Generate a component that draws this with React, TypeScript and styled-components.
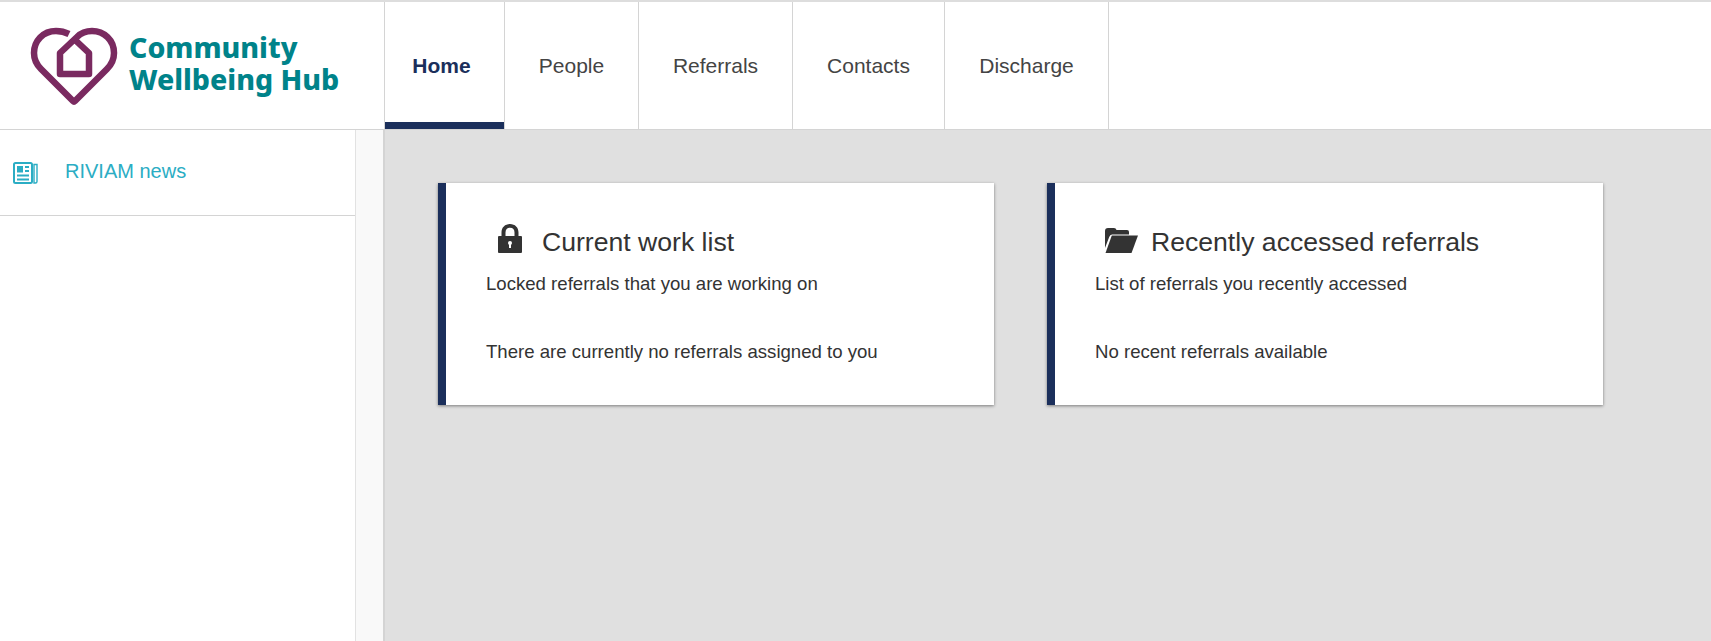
import React from 'react'
import styled, { createGlobalStyle } from 'styled-components'

const GlobalStyle = createGlobalStyle`
  html, body {
    margin: 0;
    padding: 0;
    height: 100%;
    overflow: hidden;
    background: #fff;
    font-family: "Liberation Sans", Arial, sans-serif;
    color: #333;
  }
  #root {
    height: 100%;
  }
`

const tabs = ['Home', 'People', 'Referrals', 'Contacts', 'Discharge']
const tabWidths = [119, 133, 153, 151, 163]

const cards = [
  {
    title: 'Current work list',
    subtitle: 'Locked referrals that you are working on',
    empty: 'There are currently no referrals assigned to you',
    icon: 'lock',
  },
  {
    title: 'Recently accessed referrals',
    subtitle: 'List of referrals you recently accessed',
    empty: 'No recent referrals available',
    icon: 'folder',
  },
]

function LogoMark() {
  return (
    <SLogoMark viewBox="0 0 110 100">
      <path
        d="M49 18 C45 16 41 15 36 15 C23 15 14 25 14 37 C14 44 17 49 21 53 L53 85 C54 86 54 86 55 85 L87 53 C91 49 94 44 94 37 C94 24 84 15 72 15 C66 15 61 17 57 21 L40 37 L40 58 L69 58 L69 37 L53 22"
        fill="none"
        stroke="#7a2a60"
        strokeWidth="6.5"
        strokeLinejoin="round"
      />
    </SLogoMark>
  )
}

function NewsIcon() {
  return (
    <svg width="25" height="22" viewBox="0 0 25 22">
      <rect x="1" y="1" width="18" height="20" rx="1.5" fill="none" stroke="#2badc4" strokeWidth="2" />
      <path d="M21 2.5 H24 V19.5 Q24 21 22.5 21 H21 Z" fill="none" stroke="#2badc4" strokeWidth="1.4" />
      <rect x="4" y="4" width="6" height="6.5" fill="#2badc4" />
      <path d="M12 5 H16 M12 9 H16 M4 13.5 H16 M4 17.5 H16" stroke="#2badc4" strokeWidth="2" />
    </svg>
  )
}

function LockIcon() {
  return (
    <svg width="24" height="29" viewBox="0 0 24 29">
      <path
        fillRule="evenodd"
        fill="#333"
        d="M1 12 H3.5 V8.5 C3.5 3.5 7 0 12 0 C17 0 20.5 3.5 20.5 8.5 V12 H23 Q24 12 24 13 V28 Q24 29 23 29 H1 Q0 29 0 28 V13 Q0 12 1 12 Z M7.5 12 H16.5 V8.5 C16.5 5.5 15 3.8 12 3.8 C9 3.8 7.5 5.5 7.5 8.5 Z"
      />
      <circle cx="12" cy="19" r="2" fill="#fff" />
      <rect x="11" y="19" width="2" height="5" fill="#fff" />
    </svg>
  )
}

function FolderIcon() {
  return (
    <svg width="33" height="25" viewBox="0 0 33 25">
      <path
        fill="#333"
        d="M0 3 Q0 0 3 0 H9 Q11 0 11.5 2 H22 Q24 2 24 4 V6.5 H7 Q5 6.5 4.2 9 L0 20 Z"
      />
      <path fill="#333" d="M6.8 7.5 H33 L26.5 25 H0.5 Z" />
    </svg>
  )
}

export default function App() {
  return (
    <SPage>
      <GlobalStyle />
      <SHeader>
        <SLogo>
          <LogoMark />
          <SLogoText>
            Community
            <br />
            Wellbeing Hub
          </SLogoText>
        </SLogo>
        <STabs>
          {tabs.map((tab, index) => (
            <STab key={tab} $active={index === 0} $width={tabWidths[index]}>
              {tab}
            </STab>
          ))}
        </STabs>
      </SHeader>
      <SBody>
        <SSidebar>
          <SSideItem>
            <SSideIcon>
              <NewsIcon />
            </SSideIcon>
            <SSideLabel>RIVIAM news</SSideLabel>
          </SSideItem>
        </SSidebar>
        <SGutter />
        <SMain>
          {cards.map((card) => (
            <SCard key={card.title}>
              <STitleRow>
                <SIconSlot $inset={card.icon === 'lock' ? 12 : 10}>
                  {card.icon === 'lock' ? <LockIcon /> : <FolderIcon />}
                </SIconSlot>
                <STitle>{card.title}</STitle>
              </STitleRow>
              <SSubtitle>{card.subtitle}</SSubtitle>
              <SEmpty>{card.empty}</SEmpty>
            </SCard>
          ))}
        </SMain>
      </SBody>
    </SPage>
  )
}

const SPage = styled.div`
  height: 100%;
  display: flex;
  flex-direction: column;
  border-top: 2px solid #ddd;
  box-sizing: border-box;
`

const SHeader = styled.header`
  display: flex;
  height: 128px;
  flex: none;
  box-sizing: border-box;
  border-bottom: 1px solid #d4d4d4;
`

const SLogo = styled.div`
  width: 385px;
  flex: none;
  box-sizing: border-box;
  padding-left: 20px;
  display: flex;
  align-items: center;
  border-right: 1px solid #d4d4d4;
`

const SLogoMark = styled.svg`
  width: 110px;
  height: 100px;
  flex: none;
`

const SLogoText = styled.div`
  font-family: "Noto Sans", sans-serif;
  font-weight: 800;
  font-size: 28.5px;
  line-height: 32px;
  color: #00838a;
  margin: -5px 0 0 -1px;
  white-space: nowrap;
`

const STabs = styled.nav`
  display: flex;
`

const STab = styled.div<{ $active: boolean; $width: number }>`
  width: ${({ $width }) => $width}px;
  box-sizing: border-box;
  flex: none;
  display: flex;
  align-items: center;
  justify-content: center;
  padding: 8px ${({ $active }) => ($active ? 6 : 0)}px 0 0;
  font-size: 21px;
  font-weight: ${({ $active }) => ($active ? 700 : 400)};
  color: ${({ $active }) => ($active ? '#1b2f5b' : '#444')};
  border-bottom: 7px solid ${({ $active }) => ($active ? '#1b2f5b' : 'transparent')};
  box-shadow: 1px 0 0 #d4d4d4;
  margin-right: 1px;
`

const SBody = styled.div`
  flex: 1;
  display: flex;
  min-height: 0;
`

const SSidebar = styled.aside`
  width: 356px;
  flex: none;
  box-sizing: border-box;
  border-right: 1px solid #e2e2e2;
`

const SSideItem = styled.div`
  height: 86px;
  box-sizing: border-box;
  display: flex;
  align-items: center;
  padding-left: 13px;
  font-size: 20px;
  color: #2badc4;
  border-bottom: 1px solid #d4d4d4;
`

const SSideIcon = styled.span`
  width: 52px;
  display: flex;
`

const SSideLabel = styled.span`
  margin-bottom: 2px;
`

const SGutter = styled.div`
  width: 29px;
  flex: none;
  box-sizing: border-box;
  background: #f9f9f9;
  border-right: 2px solid #d4d4d4;
`

const SMain = styled.main`
  flex: 1;
  background: #e0e0e0;
  padding: 53px;
  display: grid;
  grid-template-columns: 556px 556px;
  gap: 53px;
  align-items: start;
`

const SCard = styled.section`
  height: 222px;
  box-sizing: border-box;
  background: #fff;
  border-left: 8px solid #1b2f5b;
  box-shadow: 0 1px 3px rgba(0, 0, 0, 0.45);
  padding: 41px 40px 0;
`

const STitleRow = styled.div`
  display: flex;
  align-items: center;
  height: 29px;
`

const SIconSlot = styled.span<{ $inset: number }>`
  width: 56px;
  height: 29px;
  flex: none;
  box-sizing: border-box;
  padding-left: ${({ $inset }) => $inset}px;
  display: flex;
  align-items: flex-end;
`

const STitle = styled.h2`
  margin: 8px 0 0;
  font-size: 26.6px;
  font-weight: 400;
  color: #333;
  white-space: nowrap;
`

const SSubtitle = styled.p`
  margin: 20px 0 0;
  font-size: 18.6px;
  line-height: 22px;
  color: #333;
`

const SEmpty = styled.p`
  margin: 46px 0 0;
  font-size: 18.6px;
  line-height: 22px;
  color: #333;
`
